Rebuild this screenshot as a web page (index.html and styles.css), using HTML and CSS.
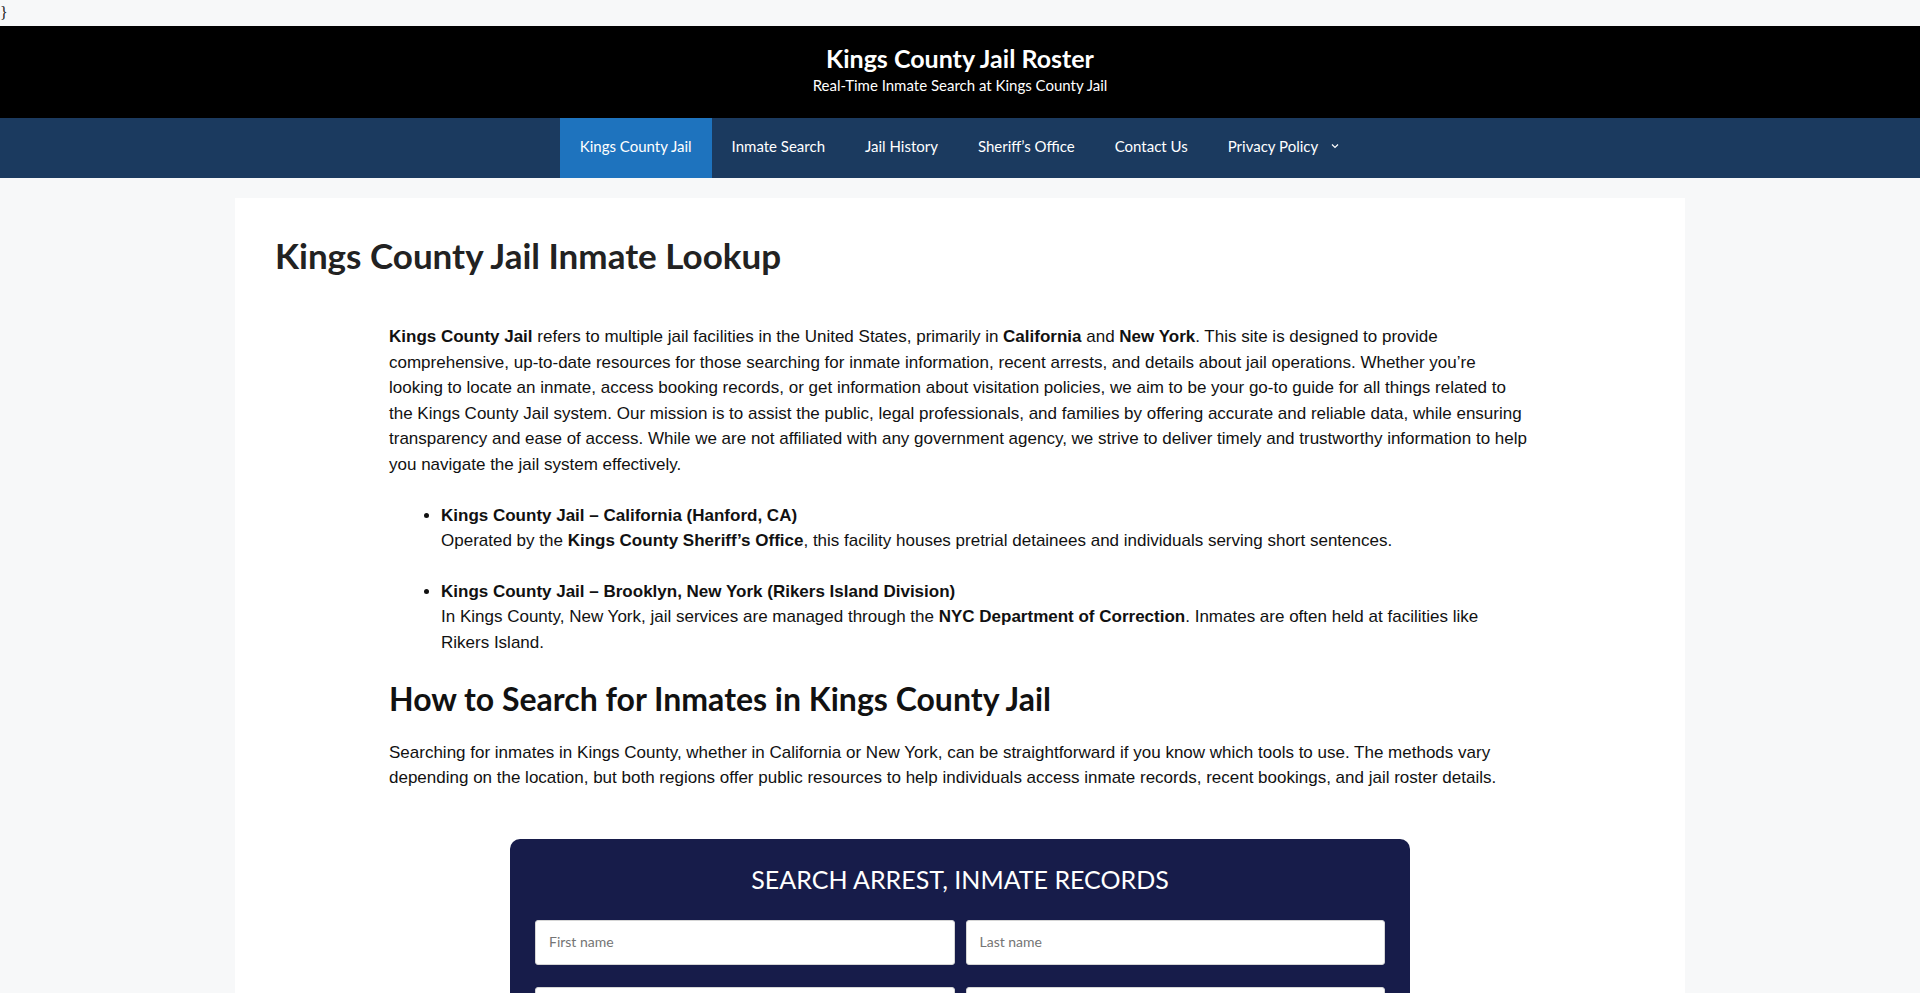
FILE: index.html
```html
<!DOCTYPE html>
<html lang="en">
<head>
<meta charset="utf-8">
<title>Kings County Jail Roster</title>
<link rel="stylesheet" href="styles.css">
</head>
<body>
<div class="stray">}</div>
<header class="site-header">
  <div class="site-title">Kings County Jail Roster</div>
  <div class="site-desc">Real-Time Inmate Search at Kings County Jail</div>
</header>
<nav class="main-nav">
  <ul class="menu">
    <li class="menu-item active"><a href="#">Kings County Jail</a></li>
    <li class="menu-item"><a href="#">Inmate Search</a></li>
    <li class="menu-item"><a href="#">Jail History</a></li>
    <li class="menu-item"><a href="#">Sheriff’s Office</a></li>
    <li class="menu-item"><a href="#">Contact Us</a></li>
    <li class="menu-item has-sub"><a href="#">Privacy Policy<svg class="caret" width="10" height="10" viewBox="0 0 10 10"><path d="M2 3.5 L5 6.5 L8 3.5" fill="none" stroke="#fff" stroke-width="1.2"/></svg></a></li>
  </ul>
</nav>
<main class="site-main">
  <article class="card">
    <h1 class="page-title">Kings County Jail Inmate Lookup</h1>
    <div class="entry">
      <p><strong>Kings County Jail</strong> refers to multiple jail facilities in the United States, primarily in <strong>California</strong> and <strong>New York</strong>. This site is designed to provide comprehensive, up-to-date resources for those searching for inmate information, recent arrests, and details about jail operations. Whether you’re looking to locate an inmate, access booking records, or get information about visitation policies, we aim to be your go-to guide for all things related to the Kings County Jail system. Our mission is to assist the public, legal professionals, and families by offering accurate and reliable data, while ensuring transparency and ease of access. While we are not affiliated with any government agency, we strive to deliver timely and trustworthy information to help you navigate the jail system effectively.</p>
      <ul class="facilities">
        <li><strong>Kings County Jail – California (Hanford, CA)</strong><br>Operated by the <strong>Kings County Sheriff’s Office</strong>, this facility houses pretrial detainees and individuals serving short sentences.</li>
        <li><strong>Kings County Jail – Brooklyn, New York (Rikers Island Division)</strong><br>In Kings County, New York, jail services are managed through the <strong>NYC Department of Correction</strong>. Inmates are often held at facilities like Rikers Island.</li>
      </ul>
      <h2 class="section-title">How to Search for Inmates in Kings County Jail</h2>
      <p>Searching for inmates in Kings County, whether in California or New York, can be straightforward if you know which tools to use. The methods vary depending on the location, but both regions offer public resources to help individuals access inmate records, recent bookings, and jail roster details.</p>
      <form class="search-box">
        <div class="search-title">SEARCH ARREST, INMATE RECORDS</div>
        <div class="field-grid">
          <input class="field" type="text" placeholder="First name">
          <input class="field" type="text" placeholder="Last name">
          <input class="field" type="text" placeholder="City">
          <input class="field" type="text" placeholder="State">
        </div>
      </form>
    </div>
  </article>
</main>
</body>
</html>
```
FILE: styles.css
```css
html, body {
  margin: 0;
  padding: 0;
}
body {
  background: #f7f8f9;
  font-family: "Liberation Sans", Arial, sans-serif;
  color: #222;
}
.stray {
  font-family: "Liberation Serif", serif;
  font-size: 16px;
  line-height: 26px;
  height: 26px;
  color: #222;
}
.site-header {
  background: #000;
  height: 92px;
  box-sizing: border-box;
  padding-top: 17px;
  text-align: center;
  color: #fff;
  font-family: Lato, sans-serif;
}
.site-title {
  font-size: 25px;
  font-weight: 700;
  line-height: 30px;
}
.site-desc {
  font-size: 15px;
  line-height: 24px;
}
.main-nav {
  background: #1b3a5f;
  height: 60px;
  font-family: Lato, sans-serif;
}
.menu {
  list-style: none;
  margin: 0;
  padding: 0;
  display: flex;
  justify-content: center;
  height: 100%;
}
.menu-item a {
  display: flex;
  align-items: center;
  height: 60px;
  box-sizing: border-box;
  padding: 0 20px 4px;
  color: #fff;
  text-decoration: none;
  font-size: 15px;
}
.menu-item.active a {
  background: #1e73be;
}
.caret {
  margin-left: 12px;
}
.site-main {
  padding-top: 20px;
}
.card {
  width: 1450px;
  margin: 0 auto;
  background: #fff;
  box-sizing: border-box;
  padding: 34px 40px 40px;
  min-height: 800px;
}
.page-title {
  font-family: Lato, sans-serif;
  font-weight: 700;
  font-size: 35px;
  line-height: 46px;
  margin: 0 0 46px;
  color: #222;
}
.entry {
  width: 1142px;
  margin: 0 auto;
  font-size: 17px;
  line-height: 25.6px;
  color: #111;
}
.entry p {
  margin: 0 0 25px;
}
.facilities {
  margin: 0;
  padding-left: 52px;
}
.facilities li {
  margin-bottom: 25px;
}
.facilities li:last-child {
  margin-bottom: 23px;
}
.section-title {
  font-family: Lato, sans-serif;
  font-weight: 700;
  font-size: 32px;
  line-height: 40px;
  margin: 0 0 21px;
  color: #111;
}
.search-box {
  width: 900px;
  margin: 48px auto 0;
  background: #171c4a;
  border-radius: 10px;
  padding: 20px 25px 30px;
  box-sizing: border-box;
}
.search-title {
  text-align: center;
  color: #fff;
  font-family: Lato, sans-serif;
  font-size: 25px;
  line-height: 40px;
  margin-bottom: 21px;
}
.field-grid {
  display: grid;
  grid-template-columns: 1fr 1fr;
  column-gap: 11px;
  row-gap: 22px;
}
.field {
  height: 45px;
  border: 1px solid #d6d6d6;
  border-radius: 3px;
  background: #fff;
  padding: 0 13px 2px;
  font-family: Lato, sans-serif;
  font-size: 14px;
  box-sizing: border-box;
  width: 100%;
}
.field::placeholder {
  color: #757575;
}
```
